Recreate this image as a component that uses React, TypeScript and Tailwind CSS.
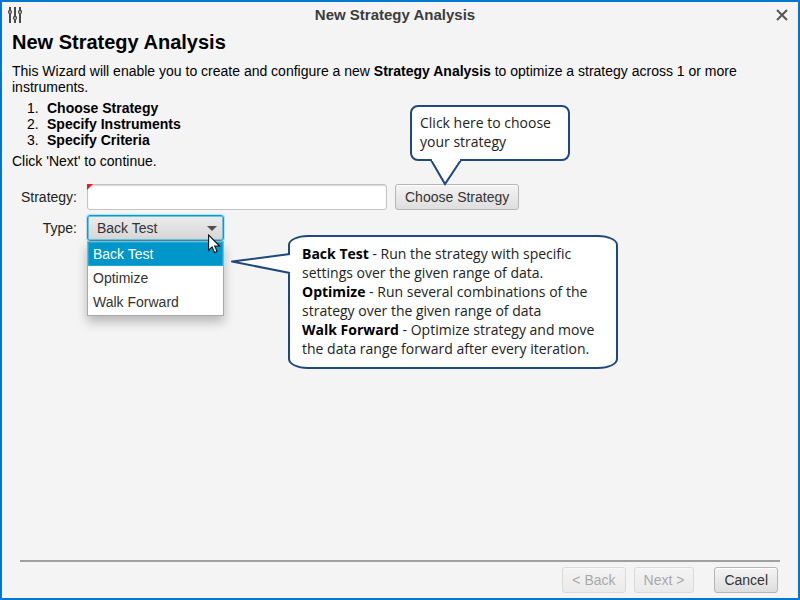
import { useState, type ReactNode } from "react";

const STEPS = ["Choose Strategy", "Specify Instruments", "Specify Criteria"];

const TYPES = [
  { name: "Back Test", text: "Run the strategy with specific settings over the given range of data." },
  { name: "Optimize", text: "Run several combinations of the strategy over the given range of data" },
  { name: "Walk Forward", text: "Optimize strategy and move the data range forward after every iteration." },
];

function PushButton({ children, disabled }: { children: ReactNode; disabled?: boolean }) {
  return (
    <button
      type="button"
      disabled={disabled}
      className="h-[26px] whitespace-nowrap rounded-[3px] border border-[#b5b5b5] bg-linear-to-b from-[#f4f4f4] to-[#dedede] px-[9px] leading-4 text-[#333333] shadow-[inset_0_1px_0_#ffffff] disabled:opacity-40"
    >
      {children}
    </button>
  );
}

function SlidersIcon() {
  return (
    <svg width="14" height="16" viewBox="0 0 14 16" fill="none" stroke="#4a4a4a" strokeWidth="2" aria-hidden="true">
      <path d="M2 0v3M2 7v9M7 0v9M7 13v3M12 0v3M12 7v9" />
      <g strokeWidth="1.3">
        <circle cx="2" cy="5" r="1.5" />
        <circle cx="7" cy="11" r="1.5" />
        <circle cx="12" cy="5" r="1.5" />
      </g>
    </svg>
  );
}

function TitleBar() {
  return (
    <header className="flex h-[26px] items-center pl-1.5 pr-2.5">
      <SlidersIcon />
      <span className="flex-1 pr-2 text-center text-[15px] font-bold text-[#3c3c3c]">New Strategy Analysis</span>
      <button type="button" aria-label="Close">
        <svg width="12" height="12" viewBox="0 0 12 12" stroke="#555555" strokeWidth="2" aria-hidden="true">
          <path d="M1 1l10 10M11 1L1 11" />
        </svg>
      </button>
    </header>
  );
}

function ChooseCallout() {
  return (
    <div className="absolute bottom-[49px] left-[15px] z-10 min-h-[56px] w-[160px] rounded-lg border-2 border-[#1f497d] bg-white px-2 pt-1.5 font-['Open_Sans',sans-serif] text-sm leading-[19px] text-[#222222]">
      Click here to choose your strategy
      <svg className="absolute left-4 top-[51px]" width="36" height="28" viewBox="0 0 36 28" aria-hidden="true">
        <path d="M2 0L17 26L33 0V1H2z" fill="#ffffff" />
        <path d="M0 2H3L17 26L33 2H36" fill="none" stroke="#1f497d" strokeWidth="2" />
        <path d="M4 0h28v3H4z" fill="#ffffff" />
      </svg>
    </div>
  );
}

function TypesCallout() {
  return (
    <div className="absolute left-[201px] top-5 z-10 w-[330px] rounded-[20px/10px] border-2 border-[#1f497d] bg-white pb-[9px] pt-[7px] pl-3 pr-2 font-['Open_Sans',sans-serif] text-sm leading-[19px] text-[#222222]">
      {TYPES.map((t) => (
        <p key={t.name}>
          <b className="text-black">{t.name}</b> - {t.text}
        </p>
      ))}
      <svg className="absolute -left-[60px] top-[14px]" width="62" height="26" viewBox="0 0 62 26" aria-hidden="true">
        <path d="M62 3L3 11L62 23z" fill="#ffffff" />
        <path
          d="M60 3L2 10.5L60 22"
          fill="none"
          stroke="#1f497d"
          strokeWidth="2"
          strokeLinejoin="round"
        />
      </svg>
    </div>
  );
}

function TypePopup({ value, onPick }: { value: string; onPick: (name: string) => void }) {
  return (
    <ul
      role="listbox"
      aria-label="Type options"
      className="absolute inset-x-0 top-[26px] border border-[#a9a9a9] bg-white pb-px shadow-[0_6px_10px_rgba(0,0,0,0.25)]"
    >
      {TYPES.map((t) => (
        <li
          key={t.name}
          role="option"
          aria-selected={t.name === value}
          onClick={() => onPick(t.name)}
          className="flex h-6 items-center px-[5px] text-[#333333] aria-selected:bg-[#0096c9] aria-selected:text-white aria-selected:shadow-[inset_0_0_0_1px_#1fa9d6]"
        >
          {t.name}
        </li>
      ))}
    </ul>
  );
}

function Pointer() {
  return (
    <svg className="absolute left-[121px] top-[19px] z-20" width="13" height="20" viewBox="0 0 13 20" aria-hidden="true">
      <path
        d="M.6 1v15.2l3.5-3.3 2.4 5.6 2.6-1.1-2.4-5.4h4.9z"
        fill="#ffffff"
        stroke="#111111"
        strokeWidth="1.1"
      />
    </svg>
  );
}

export default function App() {
  const [strategy, setStrategy] = useState("");
  const [type, setType] = useState("Back Test");

  return (
    <div className="flex min-h-screen flex-col border-2 border-[#0078d0] bg-[#f4f4f4] font-['Liberation_Sans',Arial,sans-serif] text-sm leading-4 text-black">
      <TitleBar />
      <main className="px-2.5 pt-0.5">
        <h1 className="text-xl font-bold leading-6">New Strategy Analysis</h1>
        <p className="mt-[9px]">
          This Wizard will enable you to create and configure a new <b>Strategy Analysis</b> to optimize a strategy
          across 1 or more instruments.
        </p>
        <ol className="mt-[5px] pl-[15px]">
          {STEPS.map((step, i) => (
            <li key={step} className="flex">
              <span className="w-5">{i + 1}.</span>
              <b>{step}</b>
            </li>
          ))}
        </ol>
        <p className="mt-[5px]">Click 'Next' to continue.</p>

        <form className="mt-[15px] grid grid-cols-[65px_1fr] items-center gap-x-2.5 gap-y-[5px] text-[#222222]">
          <label htmlFor="strategy" className="text-right">
            Strategy:
          </label>
          <div className="flex gap-2">
            <div className="relative">
              <input
                id="strategy"
                value={strategy}
                onChange={(e) => setStrategy(e.target.value)}
                className="block h-[26px] w-[300px] rounded-[3px] border border-[#c3c3c3] bg-white px-2 shadow-[inset_0_1px_1px_#d8d8d8] outline-none"
              />
              <svg className="absolute left-0 top-0" width="6" height="6" viewBox="0 0 6 6" aria-hidden="true">
                <path d="M0 0h6L0 6z" fill="#f9141e" />
              </svg>
            </div>
            <div className="relative">
              <PushButton>Choose Strategy</PushButton>
              <ChooseCallout />
            </div>
          </div>

          <label htmlFor="type" className="text-right">
            Type:
          </label>
          <div className="relative w-[137px]">
            <select
              id="type"
              value={type}
              onChange={(e) => setType(e.target.value)}
              className="block h-[26px] w-full appearance-none rounded-[3px] border border-[#039ed3] bg-linear-to-b from-[#ececec] to-[#d6d6d6] pl-[9px] text-[#333333] shadow-[0_0_1px_1px_#b5deec,inset_0_0_0_1px_#6cc3df] outline-none"
            >
              {TYPES.map((t) => (
                <option key={t.name}>{t.name}</option>
              ))}
            </select>
            <svg
              className="pointer-events-none absolute right-[7px] top-[11px]"
              width="10"
              height="5"
              viewBox="0 0 10 5"
              aria-hidden="true"
            >
              <path d="M0 0h10L5 5z" fill="#4f4f4f" />
            </svg>
            <TypePopup value={type} onPick={setType} />
            <TypesCallout />
            <Pointer />
          </div>
        </form>
      </main>

      <footer className="mx-[18px] mt-auto flex justify-end gap-2 border-t-2 border-[#a0a0a0] pb-[5px] pr-0.5 pt-[5px]">
        <PushButton disabled>&lt; Back</PushButton>
        <PushButton disabled>Next &gt;</PushButton>
        <div className="ml-3">
          <PushButton>Cancel</PushButton>
        </div>
      </footer>
    </div>
  );
}
